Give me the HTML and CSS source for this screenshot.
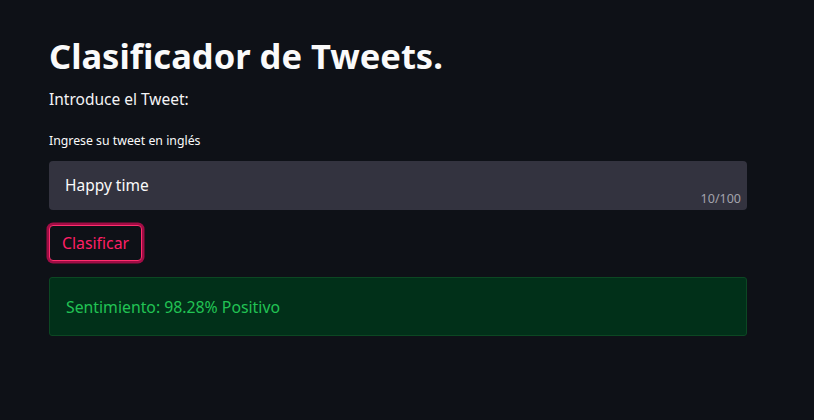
FILE: index.html
```html
<!DOCTYPE html>
<html lang="es">
<head>
<meta charset="utf-8">
<link rel="stylesheet" href="styles.css">
</head>
<body>
<main class="app">
  <h1 class="title">Clasificador de Tweets.</h1>
  <p class="intro">Introduce el Tweet:</p>
  <label class="label">Ingrese su tweet en inglés</label>
  <div class="input">
    <span class="value">Happy time</span>
    <span class="counter">10/100</span>
  </div>
  <button class="btn">Clasificar</button>
  <div class="success">Sentimiento: 98.28% Positivo</div>
</main>
</body>
</html>
```

FILE: styles.css
```css
html, body {
  margin: 0;
  padding: 0;
  background: #0e1117;
  font-family: "Noto Sans", "Open Sans", sans-serif;
  color: #fafafa;
}
.app {
  width: 698px;
  padding: 29px 0 0 49px;
  display: flex;
  flex-direction: column;
  align-items: flex-start;
}
.title {
  margin: 0;
  font-size: 34.5px;
  font-weight: 700;
  line-height: 54px;
  letter-spacing: 0;
}
.intro {
  margin: 4px 0 0 0;
  font-size: 15.5px;
  line-height: 24px;
  font-weight: 400;
  color: #f4f4f6;
}
.label {
  margin-top: 21px;
  font-size: 12.3px;
  line-height: 18px;
}
.input {
  margin-top: 11px;
  width: 698px;
  height: 49px;
  background: #33333f;
  border-radius: 4px;
  position: relative;
  display: flex;
  align-items: center;
  box-sizing: border-box;
  padding-left: 16px;
}
.value {
  font-size: 15.5px;
  color: #fafafa;
  margin-top: -2px;
}
.counter {
  position: absolute;
  right: 6px;
  bottom: 3px;
  font-size: 12.5px;
  color: #a3a3ad;
}
.btn {
  margin-top: 15px;
  height: 36px;
  padding: 0 12px;
  background: #0e1117;
  border: 1px solid #ff2e6e;
  border-radius: 4px;
  box-shadow: 0 0 0 2.5px #a10c45;
  color: #ff1f66;
  font-family: inherit;
  font-size: 15.8px;
  font-weight: 400;
}
.success {
  margin-top: 16px;
  width: 698px;
  height: 59px;
  box-sizing: border-box;
  background: #013019;
  border: 1px solid #0c4723;
  border-radius: 3px;
  padding-left: 16px;
  display: flex;
  align-items: center;
  color: #21c354;
  font-size: 15.8px;
}
```
